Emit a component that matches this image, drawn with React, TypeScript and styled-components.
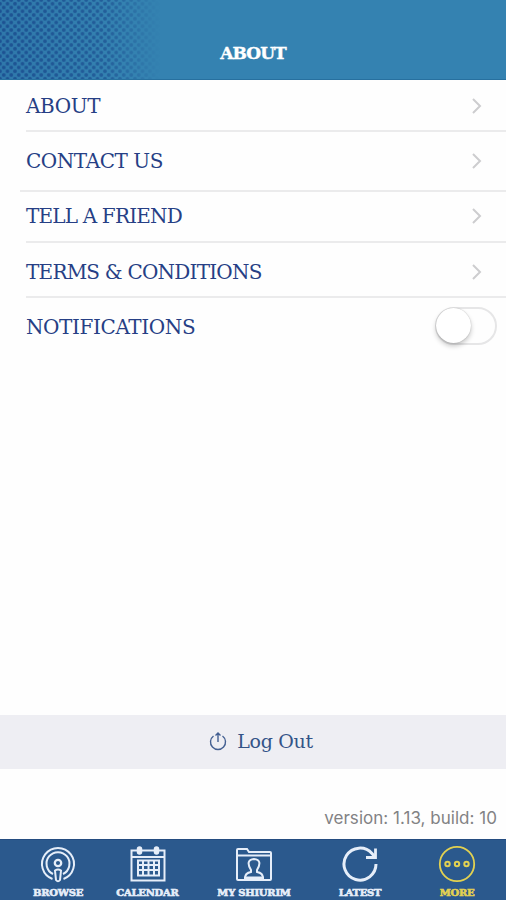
import React from 'react';
import styled, { createGlobalStyle } from 'styled-components';

const Global = createGlobalStyle`
  *{box-sizing:border-box}
  body{margin:0;background:#fefefe}
`;
const slab = `'DejaVu Serif', 'Liberation Serif', serif`;

const Screen = styled.div`
  width:506px;height:900px;display:flex;flex-direction:column;background:#fefefe;overflow:hidden;font-family:${slab};
`;
const Header = styled.header`
  height:80px;flex:none;display:grid;background:#3482b1;border-bottom:1px solid #27709f;
  > *{grid-area:1/1}
`;
const Title = styled.h1`
  margin:41px 0 0;font-size:17px;line-height:24px;font-weight:700;color:#fff;text-align:center;letter-spacing:-.9px;
  -webkit-text-stroke:.4px #fff;
`;
const List = styled.main`flex:1;display:flex;flex-direction:column;`;
const Row = styled.div<{ $h: number; $top: number; $inset?: number; $last?: boolean }>`
  height:${p => p.$h}px;margin-left:${p => p.$inset ?? 26}px;
  padding:${p => p.$top}px 9px 0 ${p => 26 - (p.$inset ?? 26)}px;
  border-bottom:${p => (p.$last ? 0 : 2)}px solid #ebebec;
  display:flex;align-items:flex-start;justify-content:space-between;
`;
const Label = styled.span<{ $track: number }>`
  font-size:20px;line-height:26px;color:#263f85;white-space:nowrap;letter-spacing:${p => p.$track}px;
`;
const Chevron = styled.svg`
  width:12px;height:18px;margin:4px 14px 0 0;fill:none;stroke:#cdcdcf;stroke-width:2;
`;
const Toggle = styled.div`
  width:62px;height:38px;margin-top:-7px;border:2px solid #e6e6e7;border-radius:19px;background:#fefefe;
`;
const Knob = styled.div`
  width:35px;height:35px;margin:-1px 0 0 -1px;border-radius:50%;background:#fff;
  box-shadow:0 3px 5px rgba(0,0,0,.22),0 0 1px rgba(0,0,0,.3);
`;
const LogOut = styled.button`
  height:54px;flex:none;border:0;padding:0 0 2px 16px;background:#eeeef3;
  display:flex;align-items:center;justify-content:center;gap:10px;
  font:19px ${slab};color:#345488;letter-spacing:-.3px;
  svg{width:18px;height:20px;fill:none;stroke:#435f91;stroke-width:1.4}
`;
const Version = styled.div`
  height:70px;flex:none;padding:38px 9px 0;text-align:right;font:17px/22px Inter,sans-serif;color:#828284;letter-spacing:.03px;
`;
const Tabs = styled.nav`
  height:61px;flex:none;background:#2b598d;border-top:1px solid #244c80;display:grid;
  grid-template-columns:116px 63px 150px 62px 115px;
`;
const Tab = styled.div<{ $active?: boolean }>`
  display:flex;flex-direction:column;align-items:center;
  padding:5px 0 0 ${p => (p.$active ? 17 : 0)}px;color:${p => (p.$active ? '#e2d151' : '#e6eef9')};
  svg{width:38px;height:38px;flex:none;fill:none;stroke:currentColor;stroke-width:2}
`;
const TabLabel = styled.span`
  margin-top:2px;font-size:10px;line-height:15px;font-weight:700;white-space:nowrap;letter-spacing:-.25px;
  -webkit-text-stroke:.6px currentColor;
`;

const Halftone = () => (
  <svg width="170" height="79">
    <defs>
      <linearGradient id="fade">
        <stop offset="0" stopColor="#fff" />
        <stop offset=".65" stopColor="#fff" stopOpacity=".75" />
        <stop offset="1" stopColor="#fff" stopOpacity="0" />
      </linearGradient>
      <linearGradient id="wash">
        <stop offset="0" stopColor="#23609c" stopOpacity=".3" />
        <stop offset=".7" stopColor="#23609c" stopOpacity="0" />
      </linearGradient>
      <mask id="fadeMask"><rect width="160" height="79" fill="url(#fade)" /></mask>
      <pattern id="dots" width="7.5" height="7.5" patternUnits="userSpaceOnUse">
        <g fill="#1d5292">
          <circle cx="3.75" cy="0" r="1.9" />
          <circle cx="3.75" cy="7.5" r="1.9" />
          <circle cx="0" cy="3.75" r="1.9" />
          <circle cx="7.5" cy="3.75" r="1.9" />
        </g>
      </pattern>
    </defs>
    <rect width="170" height="79" fill="url(#wash)" />
    <rect width="170" height="79" fill="url(#dots)" mask="url(#fadeMask)" />
  </svg>
);
const Arrow = () => <Chevron viewBox="0 0 12 18"><path d="m2 2 7 7-7 7" /></Chevron>;

const rows = [
  { text: 'ABOUT', h: 52, top: 13, track: -0.4 },
  { text: 'CONTACT US', h: 60, top: 16, track: -0.45, inset: 20 },
  { text: 'TELL A FRIEND', h: 51, top: 11, track: -0.83 },
  { text: 'TERMS & CONDITIONS', h: 55, top: 16, track: -0.78 },
];

export default function App() {
  return (
    <Screen>
      <Global />
      <Header><Halftone /><Title>ABOUT</Title></Header>
      <List>
        {rows.map(r => (
          <Row key={r.text} $h={r.h} $top={r.top} $inset={r.inset}>
            <Label $track={r.track}>{r.text}</Label><Arrow />
          </Row>
        ))}
        <Row $h={60} $top={16} $last><Label $track={-0.4}>NOTIFICATIONS</Label><Toggle><Knob /></Toggle></Row>
      </List>
      <LogOut>
        <svg viewBox="0 0 18 20"><path d="M4.500 5a7.500 7.500 0 1 0 9 0M9 11V2M6.500 4.500 9 2l2.500 2.500" /></svg>
        Log Out
      </LogOut>
      <Version>version: 1.13, build: 10</Version>
      <Tabs>
        <Tab>
          <svg viewBox="0 0 38 38">
            <path d="M13.500 34a16 16 0 1 1 11 0M14 29a11.500 11.500 0 1 1 10 0" />
            <circle cx="19" cy="18" r="3.200" strokeWidth="2.300" />
            <path d="M16 25.500q3-2 6 0l-1 9.500q-2 2.500-4 0z" />
          </svg>
          <TabLabel>BROWSE</TabLabel>
        </Tab>
        <Tab>
          <svg viewBox="0 0 38 38">
            <path d="M2.500 5.500h33v30h-33zM2.500 12h33" />
            <path d="M9 20h21M9 25h21M9 15.500h21v15H9zM14 15.500v15M19.500 15.500v15M25 15.500v15" />
            <path d="M10.500 4v3M27.500 4v3" strokeWidth="5.500" strokeLinecap="round" />
          </svg>
          <TabLabel>CALENDAR</TabLabel>
        </Tab>
        <Tab>
          <svg viewBox="0 0 38 38">
            <path d="M2 5q0-1 1-1h9l2 3h21q1 0 1 1v26q0 1-1 1H3q-1 0-1-1zM3 10.500h32" />
            <path d="M10 33q0-5 6-6v-2q-6-10 3-11 9 1 3 11v2q6 1 6 6" />
            <path d="M9 33h20" strokeWidth="3" />
          </svg>
          <TabLabel>MY SHIURIM</TabLabel>
        </Tab>
        <Tab>
          <svg viewBox="0 0 38 38">
            <path d="M35 19A16 16 0 1 1 31 8.500L34 12" strokeWidth="3" />
            <path d="M34.500 3.500v9H25" strokeWidth="2.800" />
          </svg>
          <TabLabel>LATEST</TabLabel>
        </Tab>
        <Tab $active>
          <svg viewBox="0 0 38 38">
            <circle cx="19" cy="19" r="17.200" strokeWidth="1.800" />
            <circle cx="9.500" cy="19" r="2.200" /><circle cx="19" cy="19" r="2.200" /><circle cx="28.500" cy="19" r="2.200" />
          </svg>
          <TabLabel>MORE</TabLabel>
        </Tab>
      </Tabs>
    </Screen>
  );
}
